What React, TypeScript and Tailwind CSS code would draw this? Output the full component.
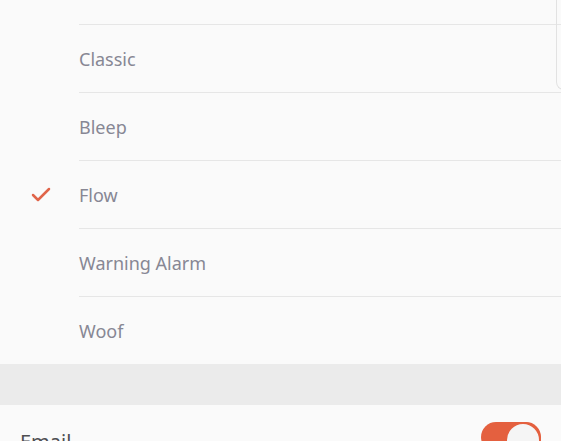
import { Check } from "lucide-react";

const SOUNDS = ["Classic", "Bleep", "Flow", "Warning Alarm", "Woof"];

export default function App() {
  const selected = "Flow";

  return (
    <div
      className="relative w-[561px] h-[441px] overflow-hidden bg-[#fafafa]"
      style={{ fontFamily: '"Noto Sans", "Open Sans", sans-serif' }}
    >
      {/* edge of the panel above */}
      <div className="absolute left-[556px] top-[-20px] w-[20px] h-[110px] border-l border-b border-[#e2e2e2] rounded-bl-[8px]" />

      {/* Sound list */}
      <div className="h-[24px]" />
      {SOUNDS.map((name) => (
        <div key={name} className="flex h-[68px]">
          <div className="w-[79px] flex items-center justify-center pl-[2px] pt-[1px]">
            {name === selected && (
              <Check className="h-[24px] w-[24px] text-[#e0654a]" strokeWidth={2.5} />
            )}
          </div>
          <div className="flex-1 flex items-center border-t border-[#e6e6e6] text-[18px] text-[#878794] pt-[2px]">
            {name}
          </div>
        </div>
      ))}

      {/* Section gap */}
      <div className="h-[41px] bg-[#ebebeb]" />

      {/* Email row */}
      <div className="flex items-start justify-between pl-[20px] pr-[20px] pt-[17px]">
        <span className="text-[20px] text-[#4e4e52] mt-[5px]">Email</span>
        <div className="relative w-[60px] h-[30px] rounded-full bg-[#e4603f]">
          <div className="absolute right-0 top-0 w-[36px] h-[36px] rounded-full bg-[#f5f5f5] border-[2px] border-[#e4603f]" />
        </div>
      </div>
    </div>
  );
}
